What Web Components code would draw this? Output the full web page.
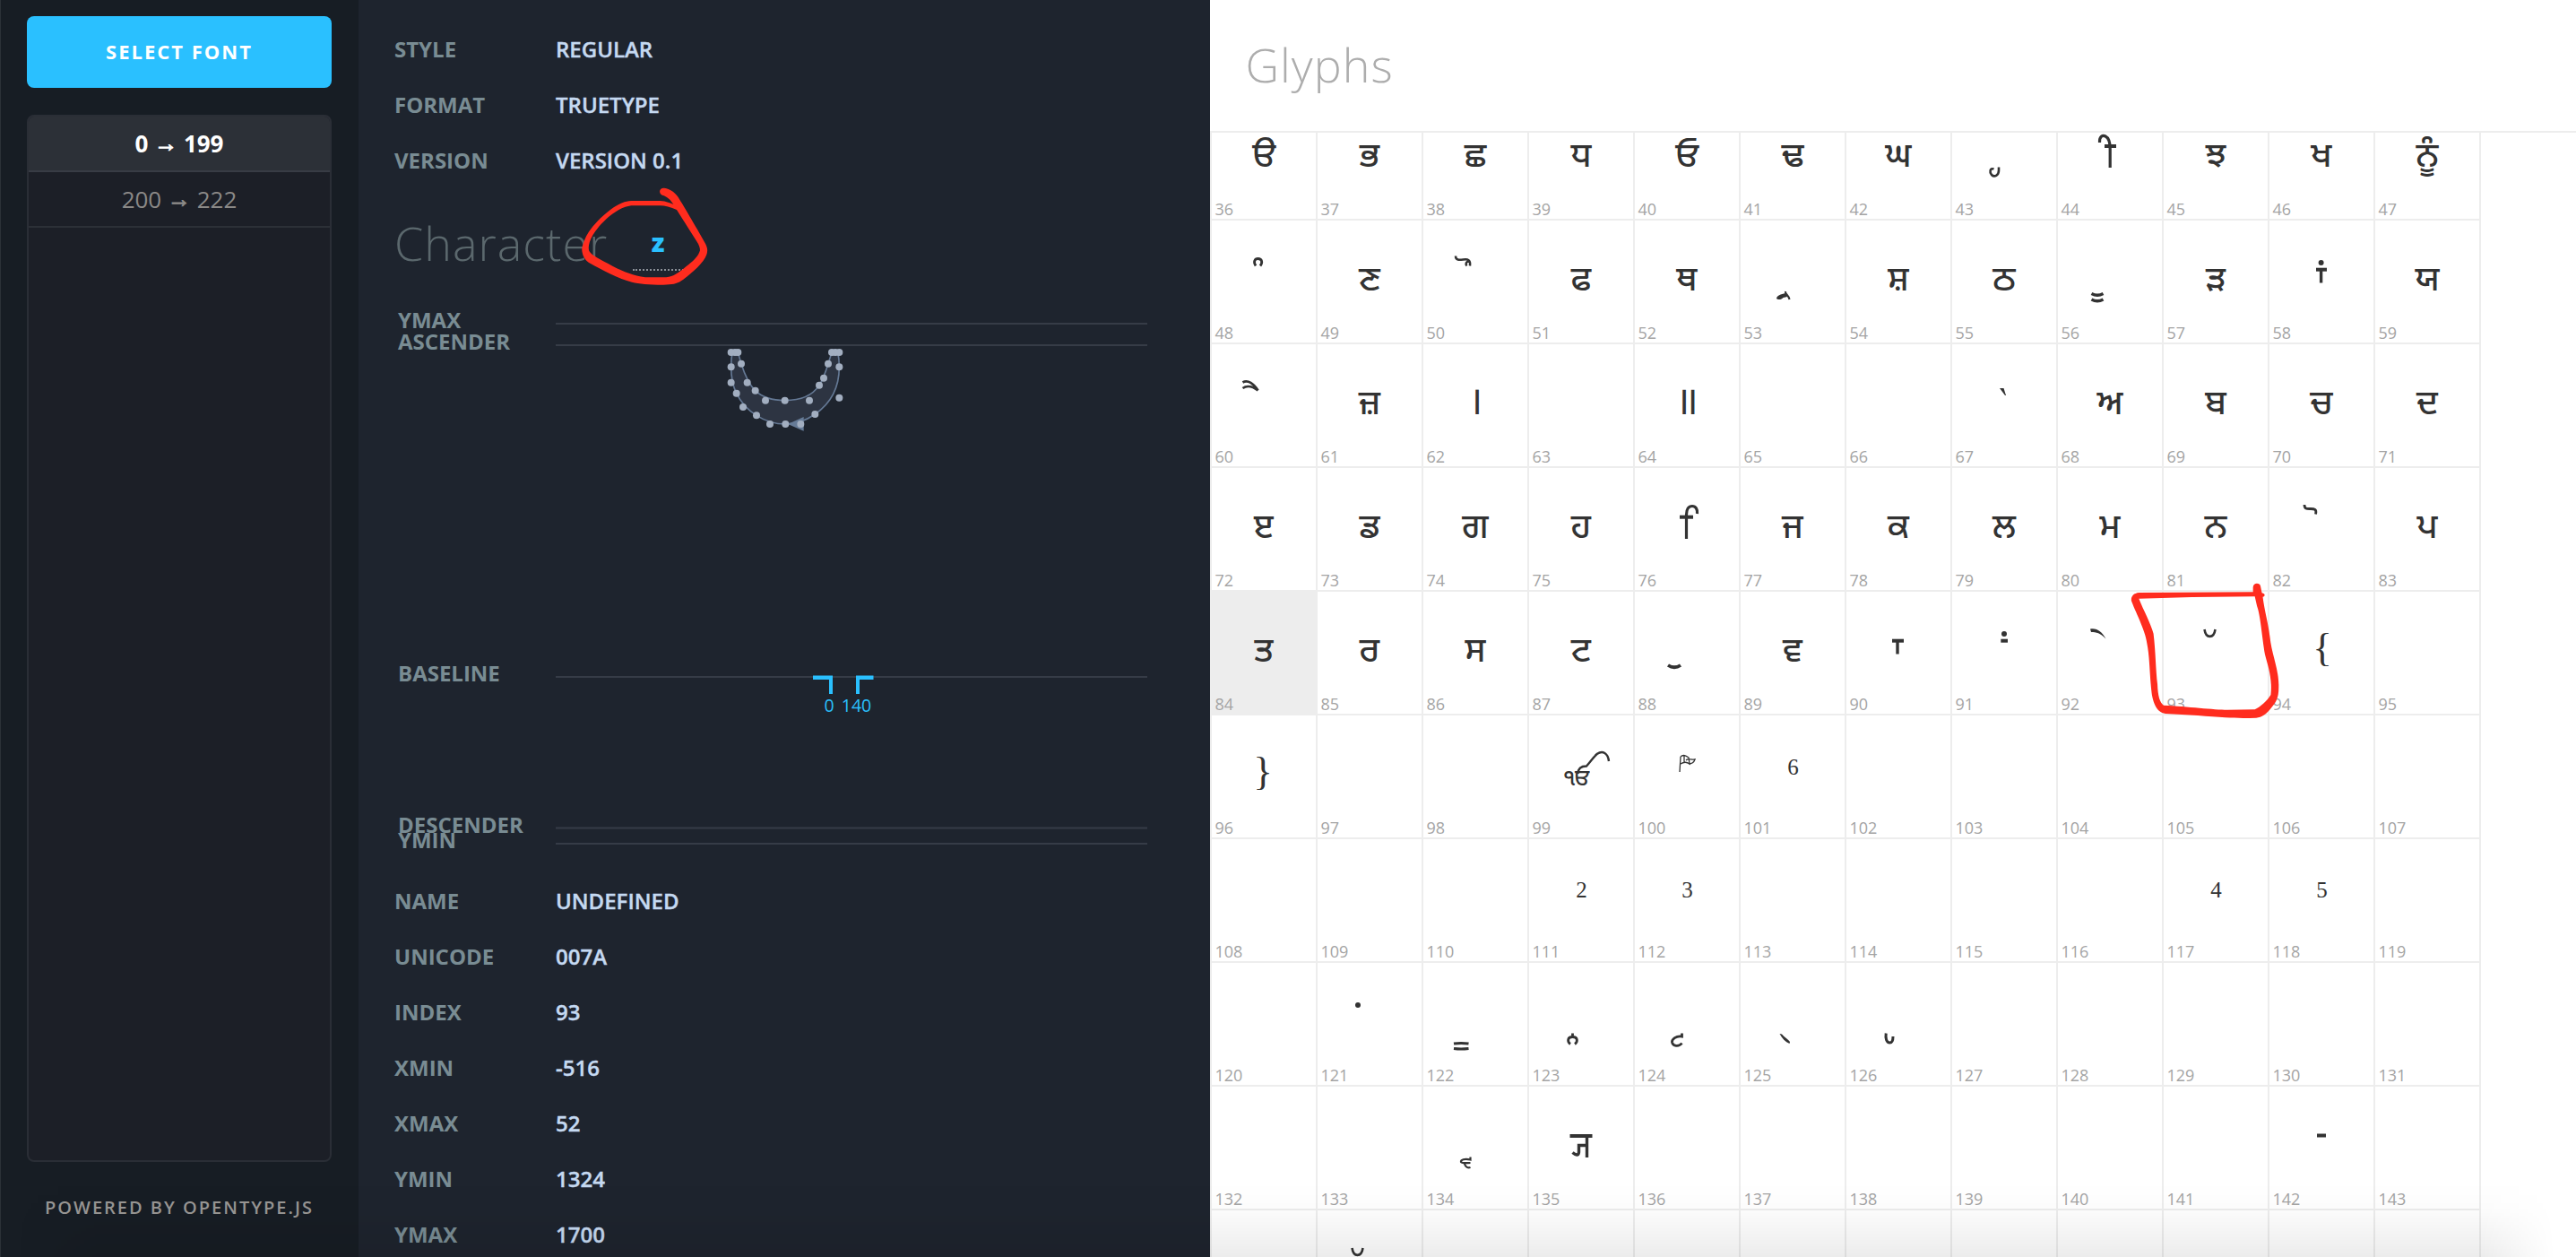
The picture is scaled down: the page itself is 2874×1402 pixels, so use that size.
<!DOCTYPE html>
<html lang="en">
<head>
<meta charset="utf-8">
<title>Glyph Inspector</title>
<style>
html,body{margin:0;height:100%;overflow:hidden}
body{font-family:"Open Sans","Liberation Sans",sans-serif;background:#1e242e}
</style>
</head>
<body>
<font-inspector></font-inspector>
<script>
const define=(name,html,setup)=>customElements.define(name,class extends HTMLElement{
  connectedCallback(){
    if(this.shadowRoot)return;
    const root=this.attachShadow({mode:'open'});
    const t=document.createElement('template');
    t.innerHTML=typeof html==='function'?html(this):html;
    root.append(t.content.cloneNode(true));
    if(setup)setup(this,root);
  }
});

/* Sidebar */
define('range-item',`<style>
:host{display:flex;align-items:center;justify-content:center;height:60px;border-bottom:2px solid #2c3037;font-size:26px;color:#8b8987}
:host([active]){background:#2c3037;border-bottom-color:#383c45;color:#fff;font-weight:700}
div{white-space:pre}
::slotted(i){font-style:normal;display:inline-block;line-height:1;vertical-align:1.5px;-webkit-text-stroke:1px currentColor}
</style><div><slot></slot></div>`);

define('side-bar',`<style>
:host{display:flex;flex-direction:column;width:400px;box-sizing:border-box;padding:18px 30px 0;background:#171d24;border-left:1px solid #2b3137;padding-left:29px}
button{flex:none;height:80px;border:0;padding:0 0 2px;border-radius:8px;background:#2ac0ff;color:#fff;font:700 22px "Open Sans",sans-serif;letter-spacing:2px;text-transform:uppercase}
.list{flex:none;box-sizing:border-box;height:1168px;margin-top:30px;border:2px solid #2a2e36;border-radius:8px;background:#1c1f27;overflow:hidden}
footer{height:100px;display:flex;align-items:center;justify-content:center;font-size:20px;font-weight:600;letter-spacing:2px;color:#989694;white-space:nowrap}
</style><button>Select font</button><div class="list"><slot></slot></div><footer>POWERED BY OPENTYPE.JS</footer>`);

/* Metadata */
define('meta-row',el=>`<style>
:host{display:flex;height:62px;line-height:62px;font-size:24px;white-space:nowrap}
b{width:180px;color:#798c93;font-weight:700}
span{color:#c5d9f1;font-weight:600;-webkit-text-stroke:.4px #c5d9f1}
</style><b>${el.getAttribute('label')}</b><span><slot></slot></span>`);

define('char-heading',`<style>
:host{display:flex;height:120px;align-items:center;font-size:52px;font-weight:300;letter-spacing:1px;color:#5b686d}
.in{width:61px;height:58px;box-sizing:border-box;margin:5px 0 0 28px;border-bottom:2px dotted #8b9098;display:flex;align-items:center;justify-content:center;font-size:29px;font-weight:800;letter-spacing:0;color:#2ac0ff;padding:0 5px 4px 0}
</style><span>Character</span><div class="in">z</div>`);

const pts=[[527,639],[540,639],[550,639],[527,688],[527,740],[545,776],[567,822],[612,850],[657,879],[709,879],[760,879],[808,846],[889,791],[889,688],[889,639],[876,639],[864,639],[852,677],[837,725],[822,749],[789,800],[707,800],[642,800],[608,767],[581,740],[561,677]];
const guides=[['YMAX',361,366],['ASCENDER',385,390],['BASELINE',755,760],['DESCENDER',923.5,929],['YMIN',941,946]];
define('glyph-plot',()=>`<style>
:host{display:block;height:644px}
svg{display:block}
text{font-family:"Open Sans",sans-serif;font-size:24px;font-weight:700;fill:#798c93}
.w{font-size:19.5px;font-weight:400;fill:#2ac0ff;text-anchor:middle}
</style><svg width="840" height="644" viewBox="440 330 840 644">
${guides.map(g=>`<path d="M620 ${g[1]}H1280" stroke="#363c47" stroke-width="2"/><text x="444" y="${g[2]}">${g[0]}</text>`).join('')}
<g transform="translate(640 180) scale(.333333)">
<path d="M709 879Q760 879 808 846Q889 791 889 688Q889 660 884 639L864 639L852 677Q837 725 822 749Q789 800 707 800Q642 800 608 767Q581 740 561 677L550 639L531 639Q527 660 527 688Q527 740 545 776Q567 822 612 850Q657 879 709 879Z" fill="#2d3442" stroke="#647894" stroke-width="5"/>
<path d="M717 879L770 855V902Z" fill="#667b97"/>
${pts.map(p=>`<circle cx="${p[0]}" cy="${p[1]}" r="12" fill="#a2aec0"/>`).join('')}
</g>
<path d="M907 753.5H929V774H925V758H907ZM974.5 753.5H955V774H959V758H974.5Z" fill="#2ac0ff"/>
<text class="w" x="925" y="794">0</text><text class="w" x="955.5" y="794">140</text>
</svg>`);

define('detail-panel',`<style>
:host{display:flex;flex-direction:column;width:950px;box-sizing:border-box;padding:24px 70px 0 40px;background:#1e242e;overflow:hidden}
slot{display:block}
</style><slot></slot>`);

/* Glyph grid: each entry is either text or stroked marks, in a 116 by 136 cell */
const T=(s,x=58)=>`<text x="${x}" y="78">${s}</text>`;
const P=s=>`<text class="d" x="58" y="78">${s}</text>`;
const S=(d,w=3.4)=>`<path d="${d}" stroke-width="${w}"/>`;
const F=d=>`<path class="f" d="${d}"/>`;
const D=(x,y)=>`<circle class="f" cx="${x}" cy="${y}" r="3"/>`;
const N=(s,y)=>`<text class="n" x="58.5" y="${y}">${s}</text>`;
const G={
36:T('ੳ'),37:T('ਭ'),38:T('ਛ'),39:T('ਧ'),40:T('ਓ'),41:T('ਢ'),42:T('ਘ'),
43:S('M46.5 80.5C42 79 41.500 84 44 87C47 90 52 88 52 82V78.500',2.6),
44:S('M46.500 51C46 44 50 42.500 53 44C57 46 58.200 51 58.200 58V79',3.2)+S('M52 55H65',4),
45:T('ਝ'),46:T('ਖ'),47:T('ਨੂੰ'),
48:S('M49 50.500C46 46 48 42.500 51.500 42.500C56 42.500 57 47 54 50.500',2.8),
49:T('ਣ'),50:S('M36 39.500C36 44.500 40 44 44.500 43.500C49.500 42.500 53 44 52 50.500M48.500 50.500C46.500 48 48 46 51 45',2.5),
51:T('ਫ'),52:T('ਥ'),
53:S('M50 79C49.500 82.500 53 82 54.500 88',2.2)+F('M50 81C45 82 40 84 40 87C42 89 46 88 47.500 86L52 85Z'),
54:T('ਸ਼'),55:T('ਠ'),56:S('M37.500 81.500Q44 85 50.500 81.500M37.500 88Q44 91.500 50.500 88',3.4),57:T('ੜ'),
58:S('M52 54.700H64',4)+S('M57.600 55V69.500')+D(57.6,47),59:T('ਯ'),
60:S('M34.500 42.500C40 39 47 44 51.500 51.500M34.500 49C40 45 47 48 51.500 51.500',2.7),
61:T('ਜ਼'),62:P('।'),64:P('॥'),67:F('M53 49H57.500L60 57H59Z'),68:T('ਅ'),69:T('ਬ'),70:T('ਚ'),71:T('ਦ'),
72:T('ੲ'),73:T('ਡ'),74:T('ਗ'),75:T('ਹ'),
76:S('M57.500 79V52C57.500 46 60 42.500 64 42.500C68 42.500 70 46 69.500 51',3.2)+S('M50 54.700H65',4),
77:T('ਜ'),78:T('ਕ'),79:T('ਲ'),80:T('ਮ'),81:T('ਨ'),82:S('M39 41C39 46 42 45.500 46 45.500C50 45.500 53 46 51.500 51.500',2.8),83:T('ਪ'),
84:T('ਤ'),85:T('ਰ'),86:T('ਸ'),87:T('ਟ'),88:S('M37 82Q44 86.500 51 82',3.8),89:T('ਵ'),
90:S('M51 54.700H64',4)+S('M57 55V69.500'),91:D(58,47)+S('M54.300 54.700H62',4),
92:F('M36 41.500C43 40 49 44 53.500 52.500C47 46 43 45 37 45Z'),93:S('M45.500 42C47 52.500 56 52.500 57.500 42',2.6),
94:'<text class="c" x="59" y="77">{</text>',96:'<text class="c" x="57" y="77">}</text>',
99:'<clipPath id="k"><path d="M30 62H68V84H30Z"/></clipPath><g clip-path="url(#k)"><text class="ik" x="38" y="78">ੴ</text></g>'+S('M54.500 65C54.500 58.500 58 56.500 64 56.500C69 51 72 46 76 42.800C82 38.500 88 42 89 51',2.4),
100:S('M51 46L50 63M51 46C54 43 57 45 60 47L61 54C57 51 54 52 51 54M55 45V52M57 50C60 47 63 50 67 49C66 52 63 54 60 54',1.3),
101:N(6,66),111:N(2,65),112:N(3,65),117:N(4,65),118:N(5,65),
121:D(45,47),122:S('M34 90Q42 88.800 50.500 90M34 95.500Q42 96.500 50.500 95.500',3),
123:S('M46 90.500C42.500 88 42.500 82.500 48.500 82.500C54.500 82.500 54.500 88 51 90.500M48.500 83V78.500',2.8),
124:S('M52.500 78.500V82C46 81 41 85 41.500 88.500C42.500 93 49 94 52.500 89.500',2.8),
125:F('M43.500 79L46 79.500C49 83 53 85 55 88L54.500 90C50 88 46 84 43.500 79Z'),
126:S('M44.200 78.500C43.500 84 44.500 89 48.500 89C51 89 52 86 52 82',3),
134:S('M52.500 78.500V81.500C46 80 41.500 81.500 42 84C43 86 49 85 52.500 85M46 86C47 90 50 91 52.500 90',2.2),
135:S('M45.500 55H70.500',4)+S('M64.500 55V79M64 65.500H55.500V73C55 77.500 52 76.500 48.500 73.500',3.4),
142:S('M53 54.500H63',4),145:S('M38.500 42C40 52.500 49 52.500 50.500 42',2.6)};

define('glyph-cell',el=>{const n=+el.getAttribute('index');return `<style>
:host{display:block;position:relative;box-sizing:border-box;width:118px;height:138px;border-right:2px solid #ededed;border-bottom:2px solid #ededed}
:host([selected]){background:#ededed}
svg{display:block;overflow:visible}
text{font:500 38px "Noto Sans Gurmukhi","Noto Sans",sans-serif;text-anchor:middle;fill:#333}
path{fill:none;stroke:#333}
.f{fill:#333;stroke:none}
.d{font-size:44px;font-weight:400}
.n{font:25px "Liberation Serif",serif}
.c{font:45px "Liberation Serif",serif}
.ik{font-size:25px;font-weight:500;text-anchor:start}
.i{font:18px "Open Sans",sans-serif;text-anchor:start;fill:#a4a4a4}
</style><svg width="116" height="136">${G[n]||''}${n<144?`<text class="i" x="3.500" y="132">${n}</text>`:''}</svg>`});

define('glyph-grid',()=>`<style>
:host{display:block;height:1254px;overflow:hidden;border-top:2px solid #ededed}
div{display:grid;grid-template-columns:repeat(12,118px);width:1416px;border-left:2px solid #ededed;margin-top:-40px}
</style><div>${Array.from({length:120},(_,i)=>`<glyph-cell index="${i+36}"${i+36===84?' selected':''}></glyph-cell>`).join('')}</div>`);

define('glyph-panel',`<style>
:host{display:flex;flex-direction:column;flex:1;background:#fff;overflow:hidden}
h1{margin:0;height:146px;box-sizing:border-box;padding:0 0 4px 39.500px;display:flex;align-items:center;font-size:52px;font-weight:300;letter-spacing:1px;color:#adadad;flex:none}
</style><h1>Glyphs</h1><glyph-grid></glyph-grid>`);

/* Hand-drawn red markers laid over the page */
define('red-marks',`<style>
:host{position:absolute;inset:0;pointer-events:none}
svg{display:block}
path{fill:#ff2c1e;fill-rule:evenodd}
</style><svg width="2874" height="1402">
<path transform="translate(640 180) scale(.333333)" d="M303 89C325 92 345 108 355 128C372 155 410 220 441 275C450 292 448 302 445 312C435 340 395 375 360 400C345 410 330 413 300 413C250 413 220 410 195 404C150 393 100 365 50 338C30 325 24 295 30 282C40 245 60 220 90 190C120 162 145 145 170 136C180 133 190 132 200 132L290 132C310 133 325 140 334 144C325 128 312 117 297 113C284 108 285 88 303 89ZM345 162C325 153 305 148 290 148L200 148C180 148 165 155 150 163C115 183 85 215 65 245C50 270 48 290 52 300C60 315 90 328 130 350C170 370 200 382 240 388L310 388C340 385 360 365 385 345C405 330 418 315 423 298C423 290 420 280 412 268Z"/>
<path transform="translate(2100 500) scale(.49364 .333333)" d="M580 483L838 481L838 465C839 448 854 450 855 462L858 484C866 486 866 495 860 497C864 545 872 580 876 630C880 690 897 740 896 800C896 835 890 850 880 867C868 890 858 900 845 902C820 903 800 903 775 901C740 897 690 891 640 888C620 885 612 850 609 820C604 760 605 700 598 650C595 610 570 540 563 510C562 495 568 485 580 483ZM580 503C590 540 608 590 613 620C618 680 618 740 622 790C623 830 627 850 636 860C690 864 750 875 780 875L842 874C855 865 870 845 878 825C882 770 872 730 865 690C858 630 855 560 847 528L842 496L700 498Z"/>
</svg>`);

define('bottom-shade',`<style>
:host{position:absolute;left:0;right:0;bottom:0;height:84px;pointer-events:none;background:linear-gradient(rgba(0,0,0,0),rgba(0,0,0,.012) 35%,rgba(0,0,0,.075));-webkit-mask:linear-gradient(90deg,transparent 20px,#000 110px,#000 2770px,transparent 2850px)}
</style>`);

define('font-inspector',`<style>
:host{display:flex;position:relative;width:2874px;height:1402px;overflow:hidden}
</style>
<side-bar><range-item active>0 <i>→</i> 199</range-item><range-item>200 <i>→</i> 222</range-item></side-bar>
<detail-panel>
<meta-row label="STYLE">REGULAR</meta-row><meta-row label="FORMAT">TRUETYPE</meta-row><meta-row label="VERSION">VERSION 0.1</meta-row>
<char-heading></char-heading>
<glyph-plot></glyph-plot>
<meta-row label="NAME">UNDEFINED</meta-row><meta-row label="UNICODE">007A</meta-row><meta-row label="INDEX">93</meta-row><meta-row label="XMIN">-516</meta-row><meta-row label="XMAX">52</meta-row><meta-row label="YMIN">1324</meta-row><meta-row label="YMAX">1700</meta-row>
</detail-panel>
<glyph-panel></glyph-panel>
<bottom-shade></bottom-shade>
<red-marks></red-marks>`);
</script>
</body>
</html>
